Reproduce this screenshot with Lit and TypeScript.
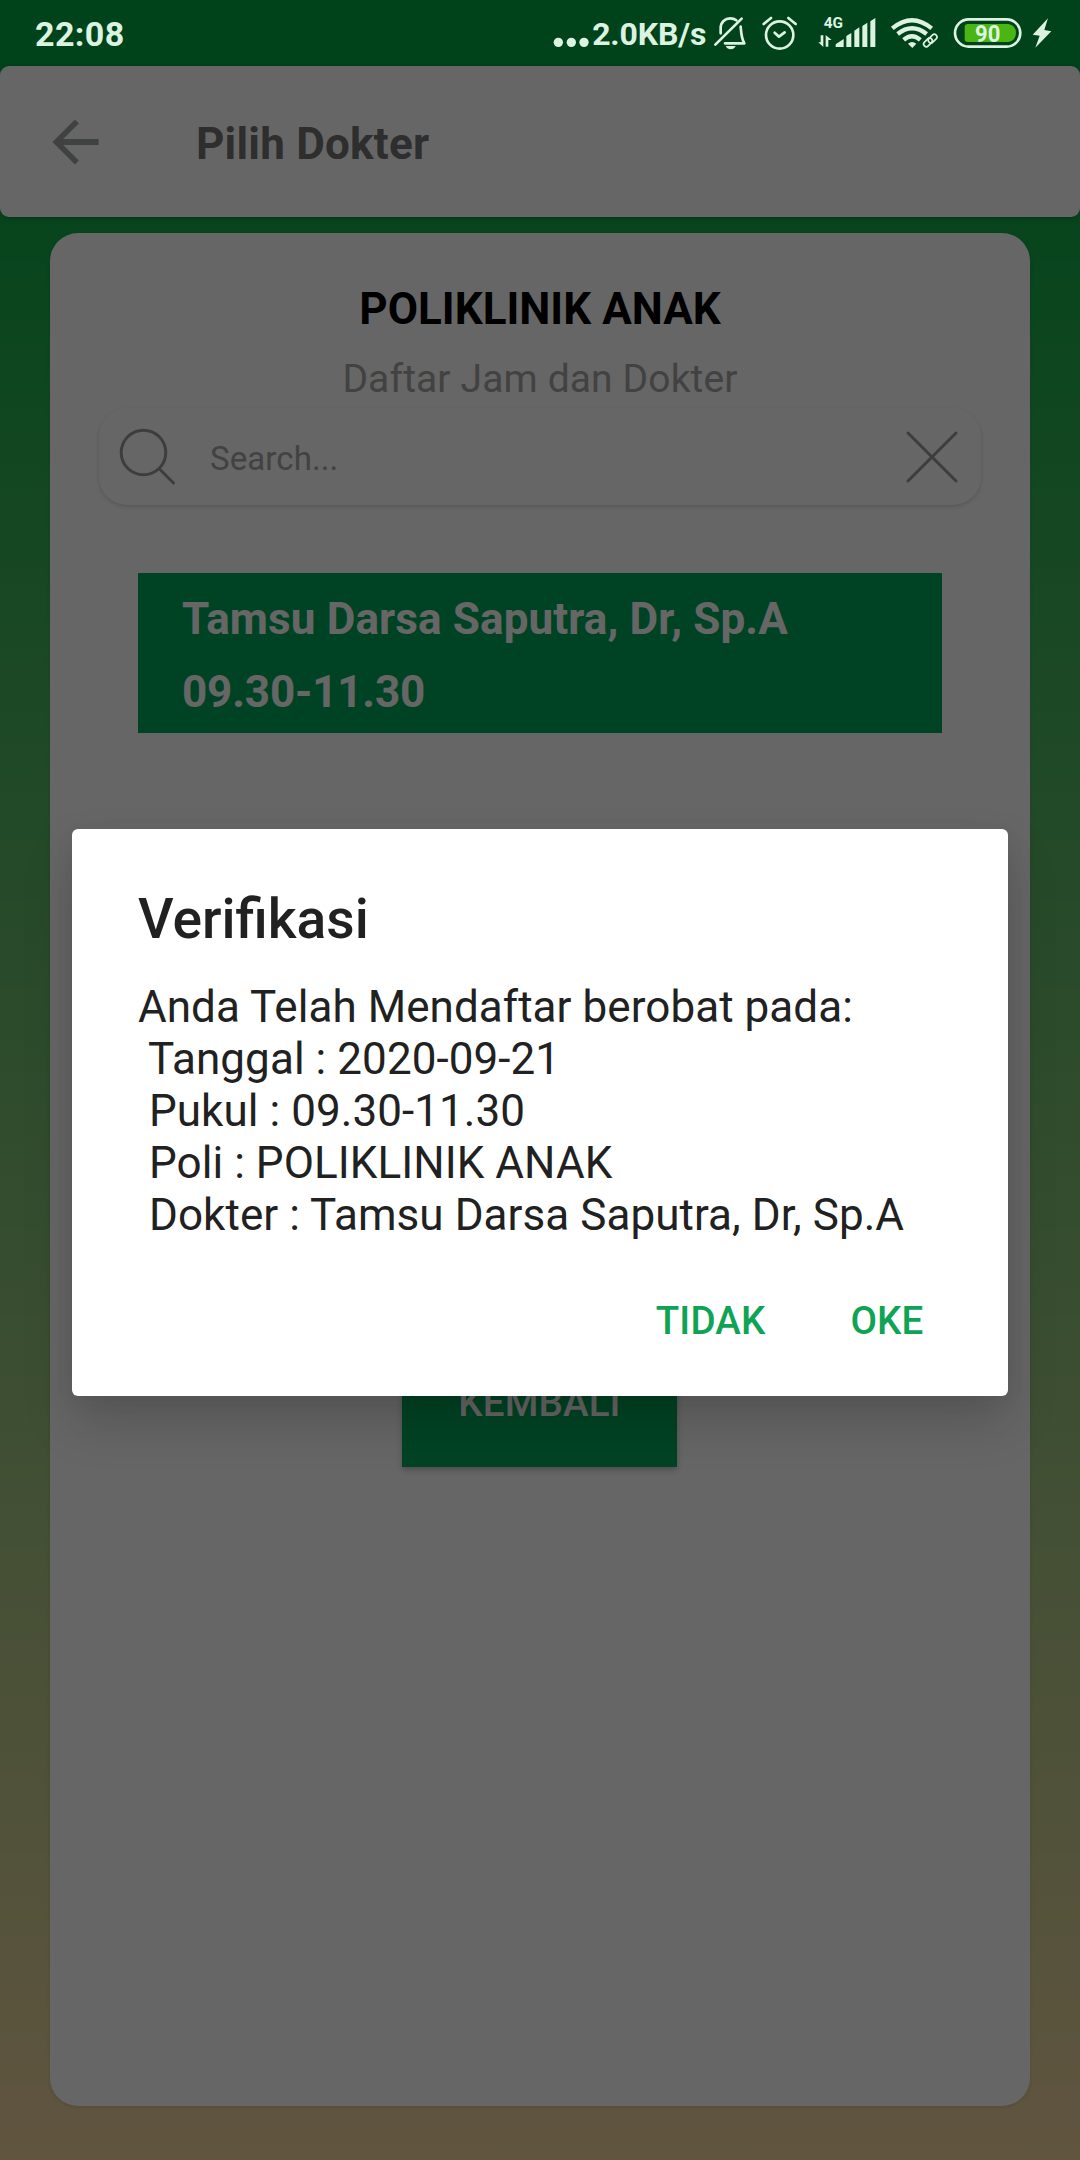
import { LitElement, html, css } from "lit";
import { customElement, state } from "lit/decorators.js";

interface Booking {
  date: string;
  time: string;
  clinic: string;
  doctor: string;
}

@customElement("status-bar")
class StatusBar extends LitElement {
  static styles = css`
    :host {
      display: flex;
      height: 66px;
      box-sizing: border-box;
      padding: 0 28px 0 35px;
      background: #00431a;
      color: #dcf3e2;
      font-weight: 700;
    }
    svg { display: block; height: 66px; flex: none; }
    .clock { font-size: 34px; line-height: 69px; letter-spacing: 0.4px; }
    .tray { display: flex; margin-left: auto; }
    .dots { width: 38px; }
    .rate { width: 121.3px; padding-left: 1px; font-size: 32px; line-height: 68px; white-space: nowrap; letter-spacing: -0.15px; }
    .bell { width: 35px; margin-right: 11.7px; }
    .alarm { width: 39px; margin-right: 17.7px; }
    .signal { width: 60px; margin-right: 13.3px; }
    .wifi { width: 49.3px; margin-right: 14px; }
    .battery { width: 69.3px; margin-right: 8px; }
    .bolt { width: 21.3px; }
    .line { fill: none; stroke: #dcf3e2; stroke-width: 8; stroke-linecap: round; stroke-linejoin: round; }
    .waves { stroke-width: 13; stroke-linecap: butt; }
    .link { stroke-width: 5; }
    .solid { fill: #dcf3e2; }
    .level { fill: #4bb514; }
    text { font-family: Roboto, "Liberation Sans", sans-serif; font-weight: 700; fill: #dcf3e2; }
  `;

  render() {
    return html`
      <div class="clock">22:08</div>
      <div class="tray">
        <svg class="dots" viewBox="40 0 114 198">
          <g class="solid"><circle cx="56" cy="127" r="14" /><circle cx="95" cy="127" r="14" /><circle cx="133" cy="127" r="14" /></g>
        </svg>
        <div class="rate">2.0KB/s</div>
        <svg class="bell" viewBox="520 0 105 198">
          <g class="line">
            <path d="M527 134 L606 56" />
            <path d="M543 100 V84 C543 66 556 55 572 55 C579 55 585 57 590 61" />
            <path d="M603 80 C605 104 605 114 614 130 H556" />
          </g>
          <path class="solid" d="M558 138 H588 Q583 148 573 148 Q563 148 558 138Z" />
        </svg>
        <svg class="alarm" viewBox="660 0 117 198">
          <g class="line">
            <circle cx="719" cy="105" r="41" />
            <path d="M704 98 L717 110 L734 97" />
            <path d="M671 72 L693 54 M745 54 L767 72" />
          </g>
        </svg>
        <svg class="signal" viewBox="50 0 180 198">
          <text x="70" y="83" font-size="46" textLength="58" lengthAdjust="spacingAndGlyphs">4G</text>
          <g class="solid">
            <path d="M61 106 H69 V141 L54 127 H61Z M76 140 V105 L94 120 H84 V140Z" />
            <path d="M106 141 V133 L130 117 V141Z M138 141 V108 L153 99 V141Z M162 141 V92 L177 82 V141Z M186 141 V78 L201 68 V141Z M210 141 V64 L225 54 V141Z" />
          </g>
        </svg>
        <svg class="wifi" viewBox="270 0 148 198">
          <g class="line waves">
            <path d="M277 85 Q336 36 395 85" />
            <path d="M293 102 Q336 67 380 102" />
            <path d="M311 120 Q336 98 361 120" />
          </g>
          <path class="solid" d="M324 131 Q336 121 349 131 L337 144Z" />
          <g class="line link">
            <rect x="383" y="108" width="30" height="16" rx="8" transform="rotate(-45 398 116)" />
            <rect x="369" y="119" width="30" height="16" rx="8" transform="rotate(-45 384 127)" />
          </g>
        </svg>
        <svg class="battery" viewBox="460 0 208 198">
          <rect class="line" x="466" y="58" width="196" height="82" rx="41" />
          <path class="level" d="M505 72 H626 Q649 76 649 99 Q649 122 626 126 H505 Q495 126 495 116 V82 Q495 72 505 72Z" />
          <text x="526" y="125" font-size="72" textLength="76" lengthAdjust="spacingAndGlyphs">90</text>
        </svg>
        <svg class="bolt" viewBox="692 0 64 198">
          <path class="solid" d="M743 55 L697 104 L718 107 L705 143 L753 94 L732 90Z" />
        </svg>
      </div>
    `;
  }
}

@customElement("app-header")
class AppHeader extends LitElement {
  static styles = css`
    :host {
      display: flex;
      align-items: center;
      height: 151px;
      box-sizing: border-box;
      padding-left: 42px;
      border-radius: 9px;
      background: #fff;
      box-shadow: 0 1px 4px rgba(0, 0, 0, 0.25);
    }
    .back { display: block; width: 66px; height: 66px; fill: #a0a2a3; }
    .title { margin: 5px 0 0 88px; font-size: 44px; line-height: 52px; font-weight: 700; letter-spacing: 0.22px; color: #737373; }
  `;

  render() {
    return html`
      <svg class="back" viewBox="0 0 24 24">
        <path d="M20.6 10.9H7.7l5.7-5.6L12 3.8l-8.2 8.2 8.2 8.2 1.4-1.5-5.7-5.6h12.9z" />
      </svg>
      <div class="title">Pilih Dokter</div>
    `;
  }
}

@customElement("confirm-dialog")
class ConfirmDialog extends LitElement {
  static properties = { booking: { attribute: false } };
  declare booking: Booking;

  static styles = css`
    :host {
      display: flex;
      flex-direction: column;
      width: 936px;
      height: 567px;
      box-sizing: border-box;
      margin-bottom: 1px;
      padding: 58px 66px 0;
      border-radius: 6px;
      background: #fff;
      color: #212121;
      box-shadow: 0 26px 50px rgba(0, 0, 0, 0.17), 0 4px 20px rgba(0, 0, 0, 0.05);
    }
    .title { font-size: 55.2px; line-height: 64px; font-weight: 500; }
    .message { margin-top: 30px; font-size: 44px; line-height: 52px; letter-spacing: 0.06px; white-space: pre; }
    .actions { display: flex; justify-content: flex-end; gap: 85px; margin-top: 57px; padding-right: 18.5px; }
    .action { font-size: 38.5px; line-height: 46px; font-weight: 500; letter-spacing: 0.15px; color: #0fa455; }
  `;

  render() {
    const b = this.booking;
    const message = [
      "Anda Telah Mendaftar berobat pada:",
      ` Tanggal : ${b.date}`,
      ` Pukul : ${b.time}`,
      ` Poli : ${b.clinic}`,
      ` Dokter : ${b.doctor}`,
    ].join("\n");
    return html`
      <div class="title">Verifikasi</div>
      <div class="message">${message}</div>
      <div class="actions">
        <div class="action">TIDAK</div>
        <div class="action">OKE</div>
      </div>
    `;
  }
}

@customElement("app-root")
class AppRoot extends LitElement {
  @state() private booking: Booking = {
    date: "2020-09-21",
    time: "09.30-11.30",
    clinic: "POLIKLINIK ANAK",
    doctor: "Tamsu Darsa Saputra, Dr, Sp.A",
  };

  static styles = css`
    :host {
      display: block;
      width: 1080px;
      height: 2160px;
      overflow: hidden;
      font-family: Roboto, "Liberation Sans", sans-serif;
    }
    .screen {
      position: relative;
      display: flex;
      flex-direction: column;
      height: 2094px;
      background: linear-gradient(#00a842, #f2d4a0);
    }
    .card {
      display: flex;
      flex-direction: column;
      height: 1873px;
      box-sizing: border-box;
      margin: 16px 50px 0;
      padding: 50px 49px 0;
      border-radius: 28px;
      background: #fff;
      box-shadow: 0 1px 4px rgba(0, 0, 0, 0.12);
    }
    .heading { font-size: 44px; line-height: 52px; font-weight: 700; text-align: center; color: #000; }
    .subheading { margin-top: 21px; font-size: 39px; line-height: 46px; letter-spacing: 0.13px; text-align: center; color: #a6a6a6; }
    .search {
      display: flex;
      align-items: center;
      height: 97px;
      box-sizing: border-box;
      margin-top: 6px;
      padding: 0 21px 0 20px;
      border-radius: 28px;
      background: #fff;
      box-shadow: 0 2px 4px rgba(0, 0, 0, 0.14), 0 0 2px rgba(0, 0, 0, 0.04);
    }
    .icon { display: block; width: 58px; height: 58px; fill: none; stroke: #9a9a9a; stroke-width: 3; stroke-linecap: round; }
    .hint { flex: 1; margin: 4px 0 0 33px; font-size: 33px; line-height: 40px; letter-spacing: 0.1px; color: #a6a6a6; }
    .doctors { height: 765px; margin: 68px 39px 0; }
    .doctor {
      height: 160px;
      box-sizing: border-box;
      padding: 9.5px 44px 0;
      background: #00a85a;
      color: #fff;
      font-size: 44px;
      line-height: 73px;
      font-weight: 700;
    }
    .name { letter-spacing: 0.13px; }
    .hours { letter-spacing: -0.15px; }
    .return {
      align-self: center;
      width: 275px;
      height: 129px;
      margin-right: 1px;
      background: #00a85a;
      color: #fff;
      font-size: 38.5px;
      line-height: 129px;
      font-weight: 500;
      letter-spacing: 0.15px;
      text-align: center;
      box-shadow: 0 3px 6px rgba(0, 0, 0, 0.25);
    }
    .scrim {
      position: absolute;
      inset: 0;
      display: flex;
      align-items: center;
      justify-content: center;
      background: rgba(0, 0, 0, 0.6);
    }
  `;

  render() {
    const b = this.booking;
    return html`
      <status-bar></status-bar>
      <div class="screen">
        <app-header></app-header>
        <div class="card">
          <div class="heading">${b.clinic}</div>
          <div class="subheading">Daftar Jam dan Dokter</div>
          <div class="search">
            <svg class="icon" viewBox="0 0 58 58">
              <circle cx="24.5" cy="24.5" r="22.3" />
              <path d="M40.5 41 L54.5 55" />
            </svg>
            <div class="hint">Search...</div>
            <svg class="icon" viewBox="0 0 58 58"><path d="M6 5 L54 53 M54 5 L6 53" /></svg>
          </div>
          <div class="doctors">
            <div class="doctor">
              <div class="name">${b.doctor}</div>
              <div class="hours">${b.time}</div>
            </div>
          </div>
          <div class="return">KEMBALI</div>
        </div>
        <div class="scrim"><confirm-dialog .booking=${b}></confirm-dialog></div>
      </div>
    `;
  }
}
